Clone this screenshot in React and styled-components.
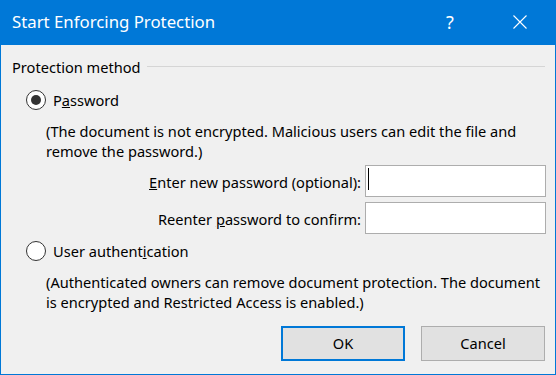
import React from "react";
import styled, { createGlobalStyle } from "styled-components";

const GlobalStyle = createGlobalStyle`
  html, body { margin: 0; padding: 0; background: #f0f0f0; }
  * { box-sizing: border-box; }
`;

const FONT = `"Noto Sans", "Open Sans", sans-serif`;

const Window = styled.div`
  width: 556px;
  height: 375px;
  border: 1px solid #0078d7;
  border-top: none;
  background: #f0f0f0;
  display: flex;
  flex-direction: column;
  font-family: ${FONT};
  font-size: 14.6px;
  color: #000;
`;

const TitleBar = styled.div`
  height: 45px;
  flex: none;
  background: #0078d7;
  display: flex;
  align-items: center;
  color: #fff;
  padding-left: 11px;
`;

const Title = styled.div`
  flex: 1;
  font-size: 16.8px;
  padding-bottom: 2px;
`;

const HelpButton = styled.div`
  width: 14px;
  font-size: 18px;
  margin-right: 53px;
  padding-bottom: 2px;
`;

const CloseButton = styled.div`
  width: 14px;
  height: 14px;
  margin-right: 28px;
  margin-bottom: 1px;
  display: flex;
`;

const Body = styled.div`
  flex: 1;
  padding: 12px 9px 0 11px;
  display: flex;
  flex-direction: column;
`;

const GroupHeader = styled.div`
  display: flex;
  align-items: center;
  height: 20px;
`;

const GroupLine = styled.div`
  flex: 1;
  height: 1px;
  background: #d5d5d5;
  margin-left: 6px;
  margin-right: 1px;
  margin-top: -1px;
`;

const RadioRow = styled.label`
  display: flex;
  align-items: center;
  height: 20px;
  margin-left: 14px;
  margin-top: ${(p) => p.$top}px;
`;

const RadioCircle = styled.span`
  width: 20px;
  height: 20px;
  border-radius: 50%;
  border: 1px solid #333;
  background: #fff;
  display: flex;
  align-items: center;
  justify-content: center;
  margin-right: 7px;
  flex: none;
  &::after {
    content: "";
    display: ${(p) => (p.$checked ? "block" : "none")};
    width: 10px;
    height: 10px;
    border-radius: 50%;
    background: #333;
  }
`;

const Description = styled.p`
  margin: ${(p) => p.$top}px 0 0 34px;
  line-height: 20px;
  white-space: nowrap;
`;

const Fields = styled.div`
  display: grid;
  grid-template-columns: 1fr 181px;
  column-gap: 4px;
  row-gap: 5px;
  margin-top: 4px;
  align-items: center;
`;

const FieldLabel = styled.label`
  text-align: right;
  padding-top: 2px;
`;

const TextBox = styled.div`
  height: 32px;
  background: #fff;
  border: 1px solid #adadad;
  position: relative;
`;

const Caret = styled.span`
  position: absolute;
  left: 2px;
  top: 2px;
  width: 1px;
  height: 22px;
  background: #000;
`;

const ButtonRow = styled.div`
  display: flex;
  justify-content: flex-end;
  gap: 16px;
  margin-top: 14px;
  margin-right: 1px;
`;

const Button = styled.button`
  width: 124px;
  height: 35px;
  background: #e1e1e1;
  border: ${(p) => (p.$default ? "2px solid #0078d7" : "1px solid #adadad")};
  font-family: ${FONT};
  font-size: 14.6px;
  color: #000;
  padding: 0 0 1px;
`;

export default function App() {
  return (
    <>
      <GlobalStyle />
      <Window>
        <TitleBar>
          <Title>Start Enforcing Protection</Title>
          <HelpButton>?</HelpButton>
          <CloseButton>
            <svg width="14" height="14" viewBox="0 0 14 14">
              <path d="M0.5 0.5 L13.5 13.5 M13.5 0.5 L0.5 13.5" stroke="#fff" strokeWidth="1.1" fill="none" />
            </svg>
          </CloseButton>
        </TitleBar>
        <Body>
          <GroupHeader>
            <span>Protection method</span>
            <GroupLine />
          </GroupHeader>
          <RadioRow $top={13}>
            <RadioCircle $checked />
            <span>P<u>a</u>ssword</span>
          </RadioRow>
          <Description $top={11}>
            (The document is not encrypted. Malicious users can edit the file and
            <br />
            remove the password.)
          </Description>
          <Fields>
            <FieldLabel><u>E</u>nter new password (optional):</FieldLabel>
            <TextBox><Caret /></TextBox>
            <FieldLabel>Reenter <u>p</u>assword to confirm:</FieldLabel>
            <TextBox />
          </Fields>
          <RadioRow $top={7}>
            <RadioCircle />
            <span>User authent<u>i</u>cation</span>
          </RadioRow>
          <Description $top={11}>
            (Authenticated owners can remove document protection. The document
            <br />
            is encrypted and Restricted Access is enabled.)
          </Description>
          <ButtonRow>
            <Button $default>OK</Button>
            <Button>Cancel</Button>
          </ButtonRow>
        </Body>
      </Window>
    </>
  );
}
